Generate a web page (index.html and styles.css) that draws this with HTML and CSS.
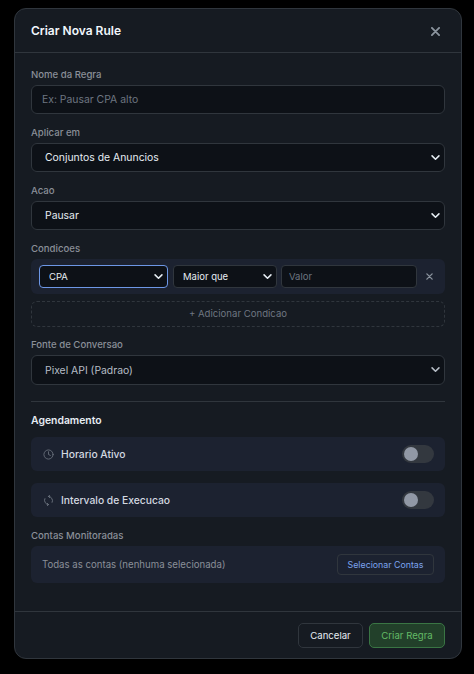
FILE: index.html
```html
<!DOCTYPE html>
<html lang="pt">
<head>
    <meta charset="UTF-8">
    <meta name="viewport" content="width=device-width, initial-scale=1.0">
    <title>Criar Nova Rule</title>
    <link rel="stylesheet" href="styles.css">
</head>
<body>

<div class="modal">
    <div class="modal-header">
        <h2>Criar Nova Rule</h2>
        <button class="close-button" aria-label="Fechar">
            <svg viewBox="0 0 10 10" width="9" height="9" fill="none" stroke="currentColor" stroke-width="2" stroke-linecap="round">
                <path d="M1 1l8 8M9 1l-8 8" />
            </svg>
        </button>
    </div>

    <div class="modal-body">
        <div class="form-group">
            <label>Nome da Regra</label>
            <input class="field" type="text" placeholder="Ex: Pausar CPA alto">
        </div>

        <div class="form-group">
            <label>Aplicar em</label>
            <select class="field">
                <option>Conjuntos de Anuncios</option>
            </select>
        </div>

        <div class="form-group">
            <label>Acao</label>
            <select class="field">
                <option>Pausar</option>
            </select>
        </div>

        <div class="form-group conditions-group">
            <label>Condicoes</label>
            <div class="condition-row">
                <select class="small-field metric focused">
                    <option>CPA</option>
                </select>
                <select class="small-field operator">
                    <option>Maior que</option>
                </select>
                <input class="small-field value" type="text" placeholder="Valor">
                <span class="remove-condition">
                    <svg viewBox="0 0 8 8" width="7" height="7" fill="none" stroke="currentColor" stroke-width="1.5" stroke-linecap="round">
                        <path d="M1 1l6 6M7 1l-6 6" />
                    </svg>
                </span>
            </div>
            <button class="add-condition">+ Adicionar Condicao</button>
        </div>

        <div class="form-group">
            <label>Fonte de Conversao</label>
            <select class="field muted-field">
                <option>Pixel API (Padrao)</option>
            </select>
        </div>

        <div class="divider"></div>

        <h3 class="section-title">Agendamento</h3>

        <div class="toggle-row">
            <svg class="row-icon" viewBox="0 0 24 24" fill="none" stroke="currentColor" stroke-width="1.8" stroke-linecap="round" stroke-linejoin="round">
                <circle cx="12" cy="12" r="10" />
                <path d="M12 6v6l4 2" />
            </svg>
            <span class="toggle-label">Horario Ativo</span>
            <span class="toggle"><span class="knob"></span></span>
        </div>

        <div class="toggle-row">
            <svg class="row-icon" viewBox="0 0 24 24" fill="none" stroke="currentColor" stroke-width="2" stroke-linecap="round" stroke-linejoin="round">
                <path d="M12 3a9 9 0 0 1 8 13" />
                <path d="M15 0l-3 3 3 3" />
                <path d="M12 21a9 9 0 0 1-8-13" />
                <path d="M9 24l3-3-3-3" />
            </svg>
            <span class="toggle-label">Intervalo de Execucao</span>
            <span class="toggle"><span class="knob"></span></span>
        </div>

        <div class="accounts-group">
            <label>Contas Monitoradas</label>
            <div class="accounts-box">
                <span>Todas as contas (nenhuma selecionada)</span>
                <button class="select-accounts">Selecionar Contas</button>
            </div>
        </div>
    </div>

    <div class="modal-footer">
        <button class="btn-cancel">Cancelar</button>
        <button class="btn-create">Criar Regra</button>
    </div>
</div>

</body>
</html>
```
FILE: styles.css
```css
* {
    box-sizing: border-box;
}

body {
    font-family: Inter, "Liberation Sans", sans-serif;
    background-color: #000;
    margin: 0;
    padding: 8px 12px 0 14px;
    color: #e6edf3;
}

button {
    font-family: inherit;
    cursor: pointer;
}

.modal {
    background-color: #161b22;
    border: 1px solid #30363d;
    border-radius: 12px;
    height: 651px;
    overflow: hidden;
}

.modal-header {
    display: flex;
    align-items: center;
    justify-content: space-between;
    height: 44px;
    padding: 0 21px 0 16px;
    border-bottom: 1px solid #30363d;
}

.modal-header h2 {
    font-size: 12px;
    font-weight: 600;
    color: #f0f6fc;
    margin: 0;
}

.close-button {
    display: flex;
    padding: 2px 0 0;
    background: none;
    border: none;
    color: #8b949e;
}

.modal-body {
    padding: 16px 16px 0;
    height: 558px;
}

.form-group {
    margin-bottom: 13px;
}

label {
    display: block;
    height: 12px;
    line-height: 12px;
    font-size: 9.6px;
    font-weight: 500;
    color: #8a8f98;
    margin-bottom: 4px;
}

.field {
    display: block;
    width: 100%;
    height: 29px;
    padding: 0 10px;
    font-family: inherit;
    font-size: 10.4px;
    color: #e6edf3;
    background-color: #0d1117;
    border: 1px solid #30363d;
    border-radius: 6px;
    outline: none;
}

input::placeholder {
    color: #6e7681;
}

select {
    appearance: none;
    background-image: url("data:image/svg+xml,%3Csvg xmlns='http://www.w3.org/2000/svg' viewBox='0 0 10 7' fill='none' stroke='%23e6edf3' stroke-width='1.8' stroke-linecap='round' stroke-linejoin='round'%3E%3Cpath d='M1 1l4 4 4-4'/%3E%3C/svg%3E");
    background-repeat: no-repeat;
    background-size: 9px 6px;
    background-position: right 4px center;
}

select.field {
    padding-left: 13px;
}

select.muted-field {
    height: 30px;
    color: #b6bdc6;
    background-image: url("data:image/svg+xml,%3Csvg xmlns='http://www.w3.org/2000/svg' viewBox='0 0 10 7' fill='none' stroke='%23b6bdc6' stroke-width='1.8' stroke-linecap='round' stroke-linejoin='round'%3E%3Cpath d='M1 1l4 4 4-4'/%3E%3C/svg%3E");
}

.conditions-group {
    margin-bottom: 12px;
}

.condition-row {
    display: flex;
    align-items: center;
    height: 35px;
    padding: 0 8px;
    background-color: #1c2230;
    border-radius: 6px;
}

.small-field {
    height: 23px;
    font-family: inherit;
    font-size: 9.5px;
    color: #e6edf3;
    background-color: #0d1117;
    border: 1px solid #30363d;
    border-radius: 4px;
    outline: none;
}

select.small-field {
    padding: 0 0 0 9px;
}

.metric {
    width: 129px;
    margin-right: 5px;
}

.focused {
    border-color: #6d97e6;
}

.operator {
    width: 104px;
    margin-right: 4px;
}

.value {
    width: 136px;
    padding: 0 7px;
}

.remove-condition {
    display: flex;
    margin-left: 9px;
    color: #8b949e;
}

.add-condition {
    display: block;
    width: 100%;
    height: 26px;
    margin-top: 7px;
    padding: 0 0 1px;
    font-size: 9.6px;
    color: #6e7681;
    background: none;
    border: 1px dashed #30363d;
    border-radius: 6px;
}

.divider {
    height: 1px;
    margin: 16px 0 12px;
    background-color: #30363d;
}

.section-title {
    height: 14px;
    line-height: 14px;
    font-size: 10.4px;
    font-weight: 600;
    color: #e6edf3;
    margin: 0 0 9px;
}

.toggle-row {
    display: flex;
    align-items: center;
    height: 34px;
    padding: 0 11px 0 12px;
    margin-bottom: 12px;
    background-color: #1c2230;
    border-radius: 6px;
}

.row-icon {
    width: 11px;
    height: 11px;
    color: #6e7681;
    margin-right: 7px;
}

.toggle-label {
    flex: 1;
    font-size: 10.3px;
    font-weight: 500;
    color: #d3d9e0;
}

.toggle {
    display: flex;
    align-items: center;
    width: 32px;
    height: 18px;
    padding: 0 2px;
    background-color: #33383f;
    border-radius: 9px;
}

.knob {
    width: 14px;
    height: 14px;
    background-color: #9198a5;
    border-radius: 50%;
}

.accounts-group {
    padding-top: 1px;
}

.accounts-box {
    display: flex;
    align-items: center;
    justify-content: space-between;
    height: 37px;
    padding: 0 11px;
    font-size: 9.65px;
    color: #8a8f98;
    background-color: #1c2230;
    border-radius: 6px;
}

.select-accounts {
    width: 97px;
    height: 21px;
    padding: 0;
    font-size: 8.8px;
    color: #7ba3ee;
    background: none;
    border: 1px solid #30363d;
    border-radius: 4px;
}

.modal-footer {
    display: flex;
    justify-content: flex-end;
    gap: 6px;
    height: 47px;
    padding: 11px 16px 0;
    border-top: 1px solid #30363d;
}

.modal-footer button {
    height: 25px;
    padding: 0;
    font-size: 9.6px;
    border-radius: 5px;
}

.btn-cancel {
    width: 65px;
    color: #e6edf3;
    background: none;
    border: 1px solid #30363d;
}

.btn-create {
    width: 76px;
    color: #63ba66;
    background-color: #22402a;
    border: 1px solid #3a7544;
}
```
